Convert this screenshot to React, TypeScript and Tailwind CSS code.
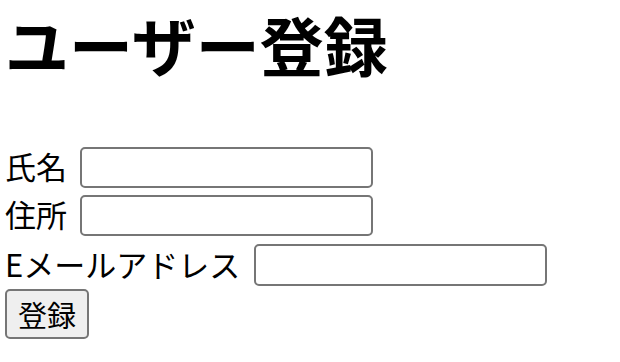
export default function App() {
  const font = { fontFamily: '"Noto Sans CJK JP", "Noto Sans", sans-serif' };
  return (
    <div className="bg-white w-[620px] h-[362px] pl-[5px] text-black" style={font}>
      <h1 className="text-[64px] font-bold leading-[86px] m-0">ユーザー登録</h1>
      <form className="flex flex-col mt-[61px] text-[31px]">
        <div className="flex items-center h-[41px]">
          <span className="leading-none -mt-[4px]">氏名</span>
          <input type="text" className="ml-[13px] w-[293px] h-[41px] border-2 border-[#767676] rounded-[5px] bg-white" />
        </div>
        <div className="flex items-center h-[41px] mt-[7px]">
          <span className="leading-none -mt-[4px]">住所</span>
          <input type="text" className="ml-[13px] w-[293px] h-[41px] border-2 border-[#767676] rounded-[5px] bg-white" />
        </div>
        <div className="flex items-center h-[42px] mt-[8px]">
          <span className="leading-none -mt-[4px]">Eメールアドレス</span>
          <input type="text" className="ml-[14px] w-[293px] h-[42px] border-2 border-[#767676] rounded-[5px] bg-white" />
        </div>
        <div className="flex mt-[3px]">
          <button type="button" className="w-[84px] h-[50px] border-2 border-[#767676] rounded-[5px] bg-[#efefef] text-[29px] leading-none">登録</button>
        </div>
      </form>
    </div>
  );
}
